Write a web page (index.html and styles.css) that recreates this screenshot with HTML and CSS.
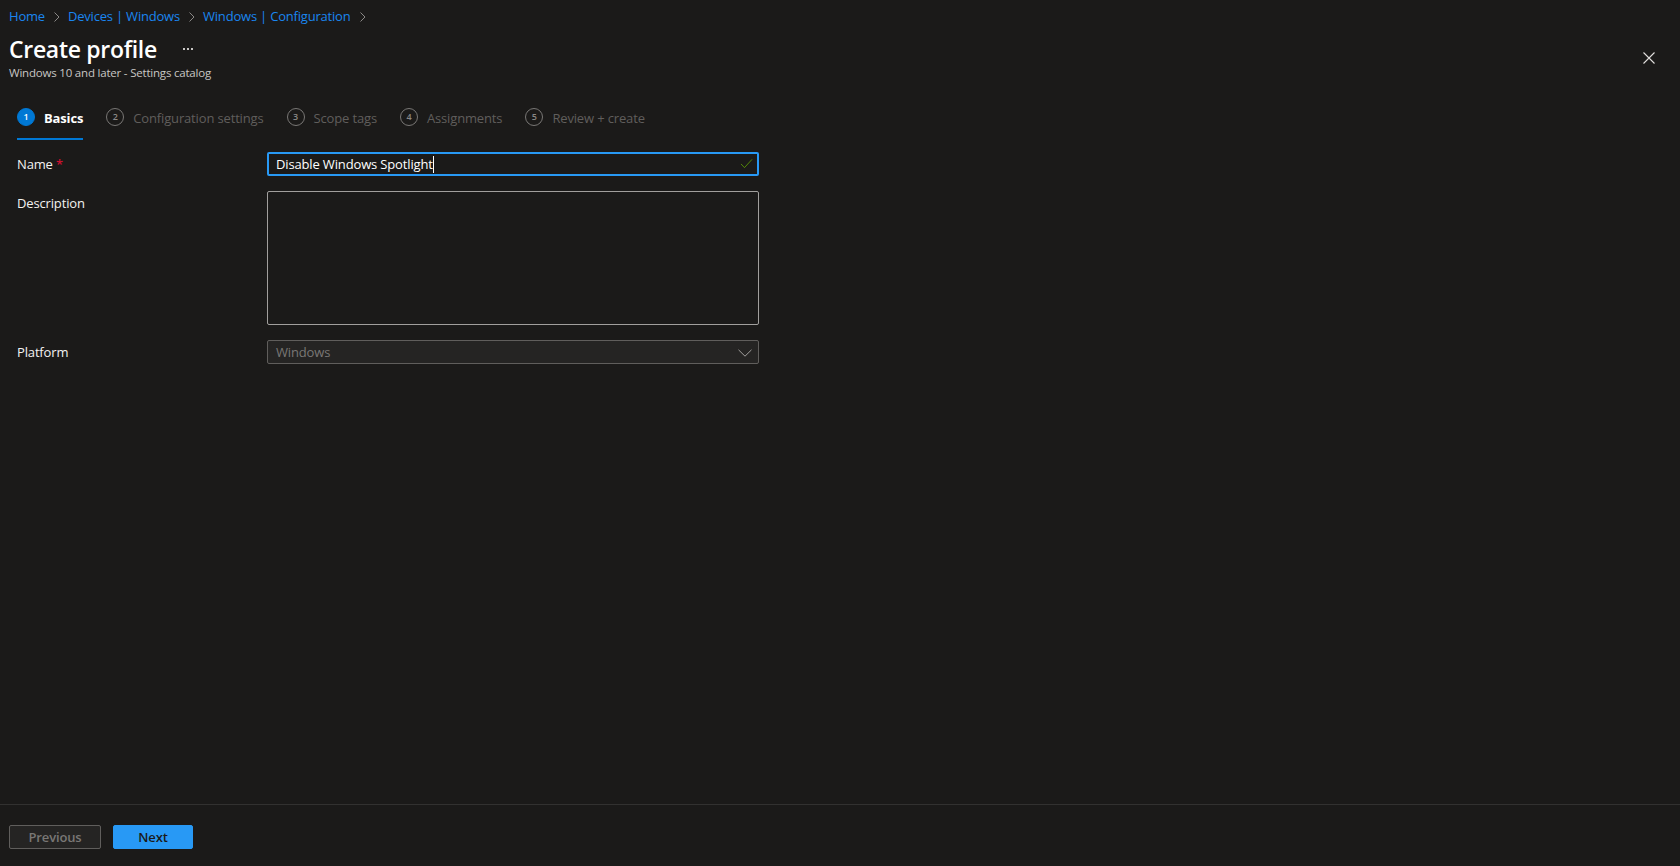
FILE: index.html
```html
<!DOCTYPE html>
<html lang="en">
<head>
<meta charset="utf-8">
<title>Create profile</title>
<link rel="stylesheet" href="styles.css">
</head>
<body>
<div class="blade">
  <div class="main">
    <nav class="crumbs">
      <a>Home</a>
      <svg class="sep" viewBox="0 0 8 12"><path d="M1.5 1.5 6 6l-4.500 4.500"/></svg>
      <a>Devices | Windows</a>
      <svg class="sep" viewBox="0 0 8 12"><path d="M1.5 1.500 6 6l-4.500 4.500"/></svg>
      <a>Windows | Configuration</a>
      <svg class="sep" viewBox="0 0 8 12"><path d="M1.500 1.500 6 6l-4.500 4.500"/></svg>
    </nav>
    <header class="head">
      <div class="titles">
        <div class="title-row">
          <h1>Create profile</h1>
          <span class="more"><i></i><i></i><i></i></span>
        </div>
        <p class="sub">Windows 10 and later - Settings catalog</p>
      </div>
      <svg class="close" viewBox="0 0 12 12"><path d="M.5.5l11 11M11.500.5l-11 11"/></svg>
    </header>
    <ol class="steps">
      <li class="step active"><span class="num">1</span><span class="lbl">Basics</span></li>
      <li class="step"><span class="num">2</span><span class="lbl">Configuration settings</span></li>
      <li class="step"><span class="num">3</span><span class="lbl">Scope tags</span></li>
      <li class="step"><span class="num">4</span><span class="lbl">Assignments</span></li>
      <li class="step"><span class="num">5</span><span class="lbl">Review + create</span></li>
    </ol>
    <form class="form">
      <div class="row">
        <label class="label">Name <span class="req">*</span></label>
        <div class="field focus">
          <span class="val">Disable Windows Spotlight</span><span class="caret"></span>
          <svg class="check" viewBox="0 0 14 12"><path d="M1 6.500 4.800 10.500 13 1.500"/></svg>
        </div>
      </div>
      <div class="row">
        <label class="label">Description</label>
        <div class="area"></div>
      </div>
      <div class="row">
        <label class="label">Platform</label>
        <div class="field disabled">
          <span class="val">Windows</span>
          <svg class="chev" viewBox="0 0 14 8"><path d="M.5.800 7 7.200 13.500.8"/></svg>
        </div>
      </div>
    </form>
  </div>
  <footer class="foot">
    <button class="btn prev" type="button">Previous</button>
    <button class="btn next" type="button">Next</button>
  </footer>
</div>
</body>
</html>
```
FILE: styles.css
```css
* { box-sizing: border-box; }
html, body { height: 100%; margin: 0; }
body {
  background: #1b1a19;
  color: #fff;
  font-family: "Open Sans", "Noto Sans", "Liberation Sans", sans-serif;
  font-size: 13px;
  overflow: hidden;
}
.blade { display: flex; flex-direction: column; height: 866px; }
.main { flex: 1; padding: 0 9px 0 9px; }

.crumbs {
  display: flex; align-items: center; height: 17px; margin-top: 8px;
  font-size: 13px; line-height: 17px; color: #1a86f0; letter-spacing: -0.2px;
}
.sep { width: 8px; height: 12px; margin: 0 7px 0 8px; fill: none; stroke: #8a8886; stroke-width: 1; }

.head { display: flex; justify-content: space-between; align-items: flex-start; margin-top: 9px; }
.title-row { display: flex; align-items: center; height: 30px; }
h1 { margin: 0; font-size: 23px; line-height: 30px; font-weight: 600; letter-spacing: -0.3px; }
.more { display: flex; gap: 2px; margin-left: 26px; }
.more i { width: 2px; height: 2px; background: #c8c6c4; }
.sub { margin: 1px 0 0; font-size: 11.500px; line-height: 15px; color: #c8c6c4; letter-spacing: -0.2px; }
.close { width: 12px; height: 12px; margin: 18px 16px 0 0; fill: none; stroke: #e1dfdd; stroke-width: 1.100; }

.steps { display: flex; list-style: none; margin: 27px 0 0 8px; padding: 0; height: 33px; gap: 23px; }
.step { display: flex; align-items: flex-start; gap: 9px; color: #605e5c; line-height: 20px; letter-spacing: -0.15px; padding-top: 1px; }
.num {
  width: 18px; height: 18px; border: 1px solid #797775; border-radius: 50%;
  font-size: 9px; line-height: 15px; text-align: center; font-weight: 600; color: #8a8886; letter-spacing: 0;
}
.step.active { color: #fff; font-weight: 700; border-bottom: 2px solid #0078d4; }
.active .num { background: #0078d4; border-color: #0078d4; color: #fff; }
.lbl { display: block; }

.form { display: flex; flex-direction: column; gap: 15px; margin: 12px 0 0 8px; }
.row { display: flex; align-items: flex-start; }
.label { width: 250px; line-height: 24px; color: #f3f2f1; letter-spacing: -0.15px; }
.req { color: #c8102e; font-weight: 600; }
.field {
  width: 492px; height: 24px; display: flex; align-items: center; padding: 0 8px;
  border-radius: 2px; position: relative; letter-spacing: -0.15px;
}
.focus { border: 2px solid #2899f5; padding-left: 7px; color: #fff; }
.caret { width: 1px; height: 17px; background: #fff; }
.check { position: absolute; right: 4px; top: 4px; width: 13px; height: 11px; fill: none; stroke: #6bb700; stroke-opacity: .75; stroke-width: 1; }
.area { width: 492px; height: 134px; border: 1px solid #a19f9d; border-radius: 2px; }
.disabled { background: #252423; border: 1px solid #605e5c; color: #797775; }
.chev { position: absolute; right: 6px; top: 8px; width: 14px; height: 8px; fill: none; stroke: #a19f9d; stroke-width: 1; }

.foot { height: 62px; border-top: 1px solid #323130; display: flex; gap: 12px; padding: 20px 9px 0; }
.btn {
  height: 24px; border-radius: 2px; font: 600 13px/20px "Open Sans", "Noto Sans", sans-serif;
  letter-spacing: -0.15px; padding: 0;
}
.prev { width: 92px; background: #252423; border: 1px solid #605e5c; color: #797775; }
.next { width: 80px; background: #2899f5; border: 1px solid #2899f5; color: #1b1a19; }
```
